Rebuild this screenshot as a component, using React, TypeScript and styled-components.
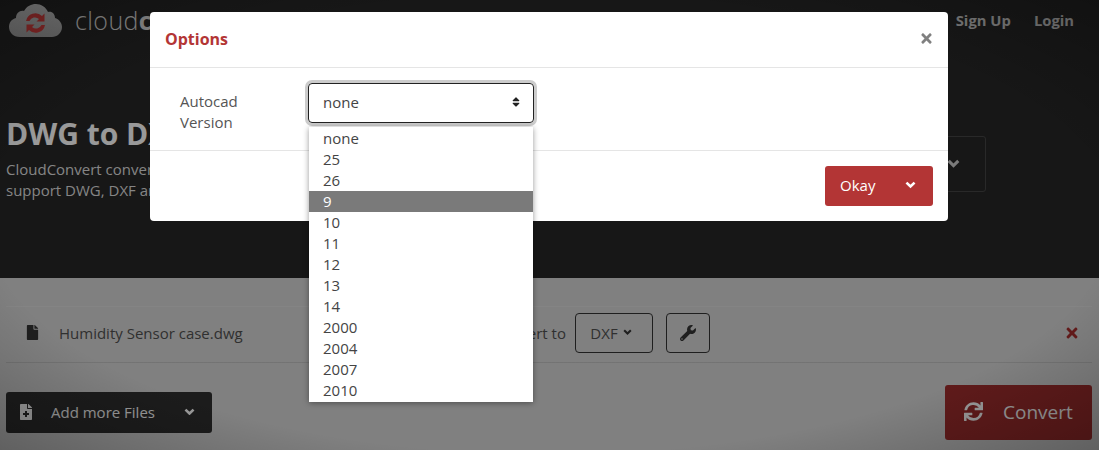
import styled, { createGlobalStyle } from "styled-components";
import { FaFile, FaFileMedical, FaSort, FaSync, FaTimes, FaWrench } from "react-icons/fa";

const versions = ["none", "25", "26", "9", "10", "11", "12", "13", "14", "2000", "2004", "2007", "2010"];

const Logo = () => (
    <svg width="54" height="38" viewBox="0 0 54 38">
        <defs>
            <linearGradient id="cloudFill" x1="0" y1="0" x2="0" y2="1">
                <stop offset="0" stopColor="#cfcfcf" />
                <stop offset="1" stopColor="#a8a8a8" />
            </linearGradient>
        </defs>
        <path
            d="M11 36C4 36 0 31 0 26c0-5 3-8 7-9 0-5 4-8 8-7 3-5 7-7 12-7s10 3 12 8c4-1 7 2 7 6 4 1 7 5 7 9 0 6-5 10-10 10Z"
            fill="url(#cloudFill)"
        />
        <path d="M17 20a9.5 9.5 0 0 1 16-5l2.500-2.500v8h-8l2.500-2.500a6 6 0 0 0-9.500 2Z" fill="#d9403f" />
        <path d="M36 24a9.500 9.500 0 0 1-16 5l-2.500 2.500v-8h8l-2.500 2.500a6 6 0 0 0 9.500-2Z" fill="#d9403f" />
    </svg>
);

const Chevron = ({ width }: { width: number }) => (
    <svg width={width} height={width * 0.72} viewBox="0 0 11 8">
        <path d="M1.4 1.6 5.5 5.6 9.6 1.6" fill="none" stroke="currentColor" strokeWidth="2.6" />
    </svg>
);

const App = () => {
    return (
        <>
            <GlobalStyle />
            <Page>
                <Header>
                    <Nav>
                        <Brand>
                            <Logo />
                            <BrandName>
                                cloud<b>convert</b>
                            </BrandName>
                        </Brand>
                        <NavLinks>
                            <span>Sign Up</span>
                            <span>Login</span>
                        </NavLinks>
                    </Nav>
                    <Hero>
                        <HeroText>
                            <h1>DWG to DXF Converter</h1>
                            <p>
                                CloudConvert converts your CAD files online. Amongst many others, we
                                <br />
                                support DWG, DXF and DWF. No need to download any software.
                            </p>
                        </HeroText>
                        <HeroSelect>
                            <Chevron width={13} />
                        </HeroSelect>
                    </Hero>
                </Header>
                <Content>
                    <FileRow>
                        <FileIcon>
                            <FaFile />
                        </FileIcon>
                        <FileName>Humidity Sensor case.dwg</FileName>
                        <ConvertLabel>Convert to</ConvertLabel>
                        <FormatButton $width={78}>
                            DXF <Chevron width={9} />
                        </FormatButton>
                        <OutlineButton $width={44}>
                            <FaWrench size={16} />
                        </OutlineButton>
                        <RemoveIcon>
                            <FaTimes />
                        </RemoveIcon>
                    </FileRow>
                    <Actions>
                        <AddButton>
                            <FaFileMedical size={16} />
                            <span>Add more Files</span>
                            <Chevron width={11} />
                        </AddButton>
                        <ConvertButton>
                            <FaSync size={19} />
                            <span>Convert</span>
                        </ConvertButton>
                    </Actions>
                </Content>
                <Backdrop />
                <Modal>
                    <ModalHeader>
                        <ModalTitle>Options</ModalTitle>
                        <CloseIcon>
                            <FaTimes />
                        </CloseIcon>
                    </ModalHeader>
                    <ModalBody>
                        <FieldLabel>
                            Autocad
                            <br />
                            Version
                        </FieldLabel>
                        <SelectWrap>
                            <SelectBox>
                                none
                                <FaSort size={12} color="#222" />
                            </SelectBox>
                            <Dropdown>
                                {versions.map((version) => (
                                    <Option key={version} $active={version === "9"}>
                                        {version}
                                    </Option>
                                ))}
                            </Dropdown>
                        </SelectWrap>
                    </ModalBody>
                    <ModalFooter>
                        <OkayButton>
                            Okay
                            <Chevron width={11} />
                        </OkayButton>
                    </ModalFooter>
                </Modal>
            </Page>
        </>
    );
};

export default App;

const GlobalStyle = createGlobalStyle`
    html, body {
        margin: 0;
        height: 100%;
        overflow: hidden;
        background: #d5d5d5;
    }
    * {
        box-sizing: border-box;
    }
    body {
        font-family: "Open Sans", "Liberation Sans", sans-serif;
        font-size: 15px;
        color: #444;
    }
`;

const Page = styled.div`
    position: relative;
    width: 1099px;
    height: 450px;
    overflow: hidden;
    background: #d5d5d5;
`;

const Header = styled.header`
    height: 278px;
    background: #262626;
    color: #fff;
    padding: 0 6px;
`;

const Nav = styled.nav`
    height: 40px;
    display: flex;
    justify-content: space-between;
    align-items: center;
    padding: 0 19px 0 3px;
`;

const Brand = styled.div`
    display: flex;
    align-items: center;
    gap: 12px;
`;

const BrandName = styled.div`
    padding-bottom: 1px;
    font-size: 25px;
    font-weight: 300;
    letter-spacing: 0.4px;
    color: #ddd;

    b {
        font-weight: 700;
    }
`;

const NavLinks = styled.div`
    display: flex;
    gap: 23px;
    font-size: 14.8px;
    font-weight: 700;
    color: #c8c8c8;
`;

const Hero = styled.div`
    display: flex;
    justify-content: space-between;
    align-items: flex-start;
    margin-top: 74px;
    padding-right: 107px;
`;

const HeroText = styled.div`
    h1 {
        margin: 0 0 5px;
        font-size: 30px;
        line-height: 40px;
        font-weight: 700;
    }

    p {
        margin: 0;
        font-size: 15px;
        line-height: 21px;
        color: #ddd;
    }
`;

const HeroSelect = styled.div`
    width: 100px;
    height: 56px;
    margin-top: 22px;
    border: 1px solid #444;
    border-radius: 3px;
    display: flex;
    align-items: center;
    justify-content: flex-end;
    padding-right: 25px;
    color: #ccc;
`;

const Content = styled.main`
    padding: 28px 7px 0 6px;
`;

const FileRow = styled.div`
    height: 57px;
    padding-bottom: 4px;
    display: flex;
    align-items: center;
    border-top: 1px solid #dcdcdc;
    border-bottom: 1px solid #c0c0c0;
`;

const FileIcon = styled.div`
    width: 53px;
    padding-left: 19px;
    display: flex;
    font-size: 15px;
    color: #333;
`;

const FileName = styled.div`
    flex: 1;
    font-size: 15px;
    color: #505050;
`;

const ConvertLabel = styled.div`
    font-size: 15px;
    color: #505050;
    margin-right: 9px;
`;

const OutlineButton = styled.div<{ $width: number }>`
    width: ${(props) => props.$width}px;
    height: 40px;
    margin-right: 13px;
    display: flex;
    align-items: center;
    justify-content: center;
    gap: 5px;
    border: 1px solid #333;
    border-radius: 4px;
    font-size: 15px;
    color: #505050;

    svg {
        color: #333;
    }
`;

const FormatButton = styled(OutlineButton)`
    padding-right: 6px;
`;

const RemoveIcon = styled.div`
    margin: 0 12px 0 341px;
    display: flex;
    font-size: 16px;
    color: #a62c2c;
`;

const Actions = styled.div`
    display: flex;
    justify-content: space-between;
    align-items: flex-start;
    margin-top: 22px;
`;

const AddButton = styled.div`
    width: 206px;
    height: 41px;
    margin-top: 7px;
    padding: 0 17px 2px 12px;
    display: flex;
    align-items: center;
    background: #2e2e2e;
    border-radius: 3px;
    color: #fff;
    font-size: 15px;

    span {
        flex: 1;
        margin-left: 17px;
    }
`;

const ConvertButton = styled.div`
    width: 147px;
    height: 55px;
    display: flex;
    align-items: center;
    gap: 20px;
    padding: 0 0 2px 19px;
    background: #9e2c2c;
    border-radius: 3px;
    color: #fff;
    font-size: 19px;
`;

const Backdrop = styled.div`
    position: absolute;
    inset: 0;
    background: radial-gradient(ellipse at center, rgba(0, 0, 0, 0.4) 0%, rgba(0, 0, 0, 0.4) 72%, rgba(0, 0, 0, 0.55) 100%);
`;

const Modal = styled.div`
    position: absolute;
    left: 150px;
    top: 12px;
    width: 798px;
    height: 209px;
    background: #fff;
    border-radius: 4px;
`;

const ModalHeader = styled.div`
    height: 56px;
    display: flex;
    align-items: center;
    justify-content: space-between;
    padding: 0 14px 2px 15px;
    border-bottom: 1px solid #e5e5e5;
`;

const ModalTitle = styled.div`
    font-size: 16px;
    font-weight: 700;
    color: #b33535;
`;

const CloseIcon = styled.div`
    display: flex;
    font-size: 15px;
    color: #808080;
`;

const ModalBody = styled.div`
    height: 83px;
    display: flex;
    padding: 15px 0 0 30px;
    border-bottom: 1px solid #e5e5e5;
`;

const FieldLabel = styled.div`
    width: 129px;
    padding-top: 8px;
    font-size: 15px;
    line-height: 21px;
    color: #555;
`;

const SelectWrap = styled.div`
    position: relative;
    width: 224px;
`;

const SelectBox = styled.div`
    width: 226px;
    height: 40px;
    margin-left: -1px;
    display: flex;
    align-items: center;
    justify-content: space-between;
    padding: 0 11px 2px 14px;
    border: 1px solid #222;
    border-radius: 4px;
    box-shadow: 0 0 0 3px #ccc;
    font-size: 15px;
    color: #444;
`;

const Dropdown = styled.div`
    position: absolute;
    top: 44px;
    left: 0;
    width: 224px;
    height: 275px;
    padding-top: 1px;
    background: #fff;
    box-shadow: 0 1px 6px rgba(0, 0, 0, 0.4);
    overflow: hidden;
`;

const Option = styled.div<{ $active: boolean }>`
    height: 21px;
    padding: 0 14px;
    font-size: 15px;
    line-height: 21px;
    background: ${(props) => (props.$active ? "#7a7a7a" : "#fff")};
    color: ${(props) => (props.$active ? "#fff" : "#444")};
`;

const ModalFooter = styled.div`
    display: flex;
    justify-content: flex-end;
    padding: 15px 15px 0 0;
`;

const OkayButton = styled.div`
    width: 108px;
    height: 40px;
    display: flex;
    align-items: center;
    justify-content: space-between;
    padding: 0 17px 2px 15px;
    background: #b33535;
    border-radius: 3px;
    color: #fff;
    font-size: 15px;
`;
